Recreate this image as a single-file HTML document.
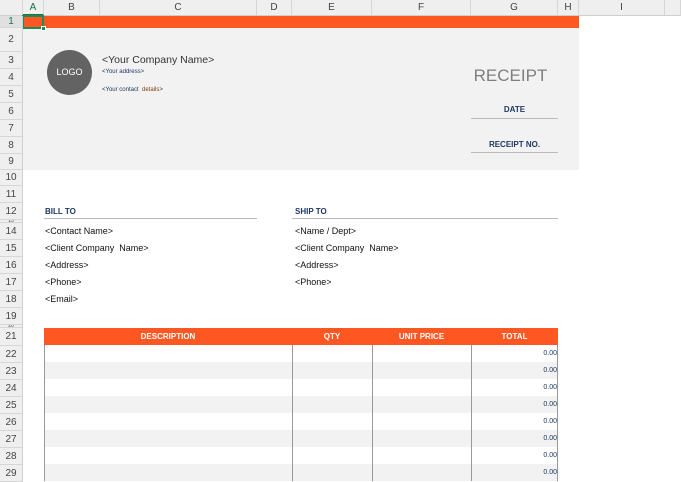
<!DOCTYPE html>
<html><head><style>
body{margin:0;width:681px;height:481px;overflow:hidden;background:#fff;font-family:"Liberation Sans",Arial,sans-serif;position:relative}
div{position:absolute;box-sizing:border-box}
.ch{top:0;height:16px;background:#efefef;border-right:1px solid #d6d6d6;border-bottom:1px solid #cfcfcf;font-size:10px;color:#444;text-align:center;line-height:15px}
.rh{left:0;width:23px;background:#efefef;border-bottom:1px solid #d6d6d6;border-right:1px solid #cfcfcf;font-size:10px;color:#444;text-align:center;overflow:hidden}
.t{font-size:9px;color:#111;white-space:nowrap}
.b{font-size:8px;font-weight:bold;color:#203864;white-space:nowrap}
.v{font-size:7px;color:#1f3864;width:60px;text-align:right}
</style></head><body>
<div class="ch" style="left:0;width:23px"></div>
<div class="ch" style="left:23px;width:21px;color:#1e7145;border-bottom:2px solid #1e7145">A</div>
<div class="ch" style="left:44px;width:56px">B</div>
<div class="ch" style="left:100px;width:157px">C</div>
<div class="ch" style="left:257px;width:35px">D</div>
<div class="ch" style="left:292px;width:80px">E</div>
<div class="ch" style="left:372px;width:99px">F</div>
<div class="ch" style="left:471px;width:87px">G</div>
<div class="ch" style="left:558px;width:21px">H</div>
<div class="ch" style="left:579px;width:86px">I</div>
<div class="ch" style="left:665px;width:16px"></div>

<div style="left:23px;top:16px;width:556px;height:12px;background:#ff5722"></div>
<div style="left:23px;top:28px;width:556px;height:142px;background:#f2f2f2"></div>
<div style="left:22px;top:15px;width:22px;height:14px;border:2px solid #1e8a55"></div>
<div style="left:41px;top:26px;width:5px;height:5px;background:#1e8a55;border:1px solid #fff"></div>

<div style="left:47px;top:50px;width:45px;height:45px;border-radius:50%;background:#636363;color:#fff;font-size:9px;text-align:center;line-height:45px">LOGO</div>
<div class="t" style="left:102px;top:54px;font-size:10.5px;color:#333">&lt;Your Company Name&gt;</div>
<div class="t" style="left:102px;top:69px;font-size:6px;color:#1f3864">&lt;Your address&gt;</div>
<div class="t" style="left:102px;top:87px;font-size:6px;color:#1f3864">&lt;Your contact&nbsp; <span style="color:#843c0c">details</span>&gt;</div>
<div style="left:467px;top:66px;width:87px;text-align:center;font-size:17px;color:#7f7f7f">RECEIPT</div>
<div class="b" style="left:471px;top:105px;width:87px;text-align:center">DATE</div>
<div style="left:471px;top:118px;width:87px;height:1px;background:#bbb"></div>
<div class="b" style="left:471px;top:140px;width:87px;text-align:center">RECEIPT NO.</div>
<div style="left:471px;top:152px;width:87px;height:1px;background:#bbb"></div>

<div class="b" style="left:45px;top:207px">BILL TO</div>
<div style="left:44px;top:218px;width:213px;height:1px;background:#bbb"></div>
<div class="b" style="left:295px;top:207px">SHIP TO</div>
<div style="left:292px;top:218px;width:266px;height:1px;background:#bbb"></div>
<div class="t" style="left:45px;top:226px">&lt;Contact Name&gt;</div>
<div class="t" style="left:45px;top:243px">&lt;Client Company&nbsp; Name&gt;</div>
<div class="t" style="left:45px;top:260px">&lt;Address&gt;</div>
<div class="t" style="left:45px;top:277px">&lt;Phone&gt;</div>
<div class="t" style="left:45px;top:294px">&lt;Email&gt;</div>
<div class="t" style="left:295px;top:226px">&lt;Name / Dept&gt;</div>
<div class="t" style="left:295px;top:243px">&lt;Client Company&nbsp; Name&gt;</div>
<div class="t" style="left:295px;top:260px">&lt;Address&gt;</div>
<div class="t" style="left:295px;top:277px">&lt;Phone&gt;</div>

<div style="left:44px;top:328px;width:514px;height:17px;background:#ff5722;color:#fff;font-size:8px;font-weight:bold;line-height:17px">
<span style="position:absolute;left:0;width:248px;text-align:center">DESCRIPTION</span>
<span style="position:absolute;left:248px;width:80px;text-align:center">QTY</span>
<span style="position:absolute;left:328px;width:99px;text-align:center">UNIT PRICE</span>
<span style="position:absolute;left:427px;width:87px;text-align:center">TOTAL</span></div>
<div style="left:44px;top:362px;width:514px;height:17px;background:#f2f2f2"></div>
<div style="left:44px;top:396px;width:514px;height:17px;background:#f2f2f2"></div>
<div style="left:44px;top:430px;width:514px;height:17px;background:#f2f2f2"></div>
<div style="left:44px;top:464px;width:514px;height:17px;background:#f2f2f2"></div>
<div style="left:44px;top:345px;width:514px;height:136px;border-left:1px solid #999;border-right:1px solid #999"></div>
<div style="left:292px;top:345px;width:1px;height:136px;background:#999"></div>
<div style="left:372px;top:345px;width:1px;height:136px;background:#999"></div>
<div style="left:471px;top:345px;width:1px;height:136px;background:#999"></div>
<div class="v" style="left:497px;top:350px">0.00</div>
<div class="v" style="left:497px;top:367px">0.00</div>
<div class="v" style="left:497px;top:384px">0.00</div>
<div class="v" style="left:497px;top:401px">0.00</div>
<div class="v" style="left:497px;top:418px">0.00</div>
<div class="v" style="left:497px;top:435px">0.00</div>
<div class="v" style="left:497px;top:452px">0.00</div>
<div class="v" style="left:497px;top:469px">0.00</div>

<div class="rh" style="top:16px;height:12px;line-height:12px;color:#1e7145;background:#e0e0e0">1</div>
<div class="rh" style="top:28px;height:24px;line-height:24px">2</div>
<div class="rh" style="top:52px;height:17px;line-height:17px">3</div>
<div class="rh" style="top:69px;height:17px;line-height:17px">4</div>
<div class="rh" style="top:86px;height:17px;line-height:17px">5</div>
<div class="rh" style="top:103px;height:17px;line-height:17px">6</div>
<div class="rh" style="top:120px;height:17px;line-height:17px">7</div>
<div class="rh" style="top:137px;height:17px;line-height:17px">8</div>
<div class="rh" style="top:154px;height:16px;line-height:16px">9</div>
<div class="rh" style="top:170px;height:16px;line-height:16px">10</div>
<div class="rh" style="top:186px;height:17px;line-height:17px">11</div>
<div class="rh" style="top:203px;height:17px;line-height:17px">12</div>
<div class="rh" style="top:220px;height:3px;line-height:3px;font-size:5px">13</div>
<div class="rh" style="top:223px;height:17px;line-height:17px">14</div>
<div class="rh" style="top:240px;height:17px;line-height:17px">15</div>
<div class="rh" style="top:257px;height:17px;line-height:17px">16</div>
<div class="rh" style="top:274px;height:17px;line-height:17px">17</div>
<div class="rh" style="top:291px;height:17px;line-height:17px">18</div>
<div class="rh" style="top:308px;height:17px;line-height:17px">19</div>
<div class="rh" style="top:325px;height:3px;line-height:3px;font-size:5px">20</div>
<div class="rh" style="top:328px;height:18px;line-height:18px">21</div>
<div class="rh" style="top:346px;height:17px;line-height:17px">22</div>
<div class="rh" style="top:363px;height:17px;line-height:17px">23</div>
<div class="rh" style="top:380px;height:17px;line-height:17px">24</div>
<div class="rh" style="top:397px;height:17px;line-height:17px">25</div>
<div class="rh" style="top:414px;height:17px;line-height:17px">26</div>
<div class="rh" style="top:431px;height:17px;line-height:17px">27</div>
<div class="rh" style="top:448px;height:17px;line-height:17px">28</div>
<div class="rh" style="top:465px;height:17px;line-height:17px">29</div>
</body></html>
